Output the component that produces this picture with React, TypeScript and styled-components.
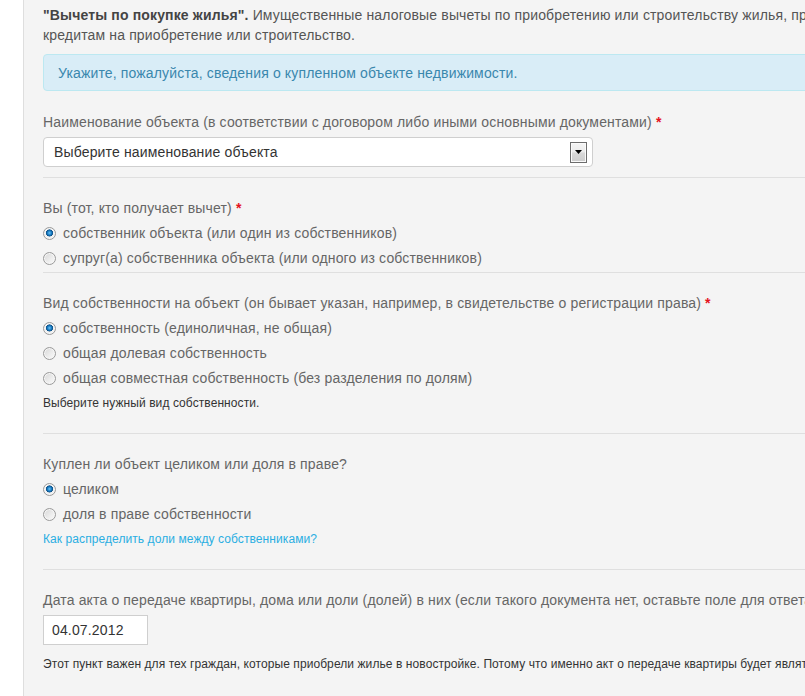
import React from "react";
import styled, { createGlobalStyle } from "styled-components";

const Global = createGlobalStyle`
  html, body { margin: 0; padding: 0; background: #fff; overflow: hidden; }
  body { font-family: "Liberation Sans", Arial, sans-serif; font-size: 14px; letter-spacing: 0.15px; }
`;

const Page = styled.div`
  display: flex;
  min-height: 100vh;
  width: 1000px;
`;

const Sidebar = styled.div`
  width: 23px;
  flex: none;
  background: #fff;
`;

const Main = styled.div`
  flex: 1;
  background: #f4f4f4;
  border-left: 1px solid #dedede;
  padding: 5px 0 0 19px;
`;

const Content = styled.div`
  width: 920px;
  display: flex;
  flex-direction: column;
`;

const Intro = styled.p`
  margin: 0;
  line-height: 20px;
  color: #555;
  b { color: #444; }
`;

const Alert = styled.div`
  margin-top: 9px;
  background: #d9edf7;
  border: 1px solid #bce8f1;
  border-radius: 4px;
  color: #3a87ad;
  line-height: 20px;
  padding: 8px 14px 7px;
`;

const Field = styled.div<{ $pt: number; $pb: number }>`
  display: flex;
  flex-direction: column;
  align-items: flex-start;
  gap: 5px;
  padding-top: ${(p) => p.$pt}px;
  padding-bottom: ${(p) => p.$pb}px;
`;

const Rule = styled.div`
  height: 0;
  border-top: 1px solid #dfdfdf;
`;

const Label = styled.div`
  line-height: 20px;
  color: #666;
  white-space: nowrap;
`;

const Req = styled.span`
  color: #e5131d;
  font-weight: bold;
`;

const SelectBox = styled.div`
  box-sizing: border-box;
  width: 550px;
  height: 30px;
  background: #fff;
  border: 1px solid #cfcfcf;
  border-radius: 4px;
  display: flex;
  align-items: center;
  justify-content: space-between;
  padding: 0 5px 0 10px;
  color: #333;
`;

const DropButton = styled.span`
  box-sizing: border-box;
  width: 17px;
  height: 21px;
  border: 1px solid #6d6d6d;
  box-shadow: inset 0 0 0 1px #fafafa;
  background: linear-gradient(#f4f4f4 0%, #ececec 45%, #d8d8d8 55%, #cdcdcd 100%);
  display: flex;
  justify-content: center;
  padding-top: 7px;
`;

const RadioRow = styled.label`
  display: flex;
  align-items: center;
  gap: 7px;
  line-height: 20px;
  color: #666;
  white-space: nowrap;
`;

const RadioDot = styled.span<{ $checked?: boolean }>`
  box-sizing: border-box;
  width: 13px;
  height: 13px;
  border-radius: 50%;
  border: 1px solid #9a9a9a;
  background: ${(p) =>
    p.$checked
      ? "radial-gradient(circle at 50% 45%, #6ec3f5 0, #1a7fc6 2px, #0d4f86 3.3px, #f2f2f2 3.8px, #e4e4e4 100%)"
      : "linear-gradient(135deg, #d6d6d6 0%, #eeeeee 60%, #fafafa 100%)"};
  box-shadow: inset 0 0 0 1px #f6f6f6;
  flex: none;
`;

const Help = styled.div<{ $spaced?: boolean }>`
  font-size: 12px;
  letter-spacing: 0.08px;
  line-height: 20px;
  color: #333;
  white-space: nowrap;
  margin-top: ${(p) => (p.$spaced ? 4 : 0)}px;
`;

const HelpLink = styled.a`
  font-size: 12px;
  letter-spacing: 0.08px;
  line-height: 20px;
  color: #2aaee2;
  text-decoration: none;
`;

const DateInput = styled.input`
  box-sizing: border-box;
  width: 105px;
  height: 30px;
  border: 1px solid #cfcfcf;
  background: #fff;
  padding: 0 8px;
  font-family: "Liberation Sans", Arial, sans-serif;
  font-size: 14px;
  letter-spacing: 0.15px;
  color: #333;
  outline: none;
`;

const Radio = ({ checked, children }: { checked?: boolean; children: React.ReactNode }) => (
  <RadioRow>
    <RadioDot $checked={checked} />
    {children}
  </RadioRow>
);

export default function App() {
  return (
    <>
      <Global />
      <Page>
        <Sidebar />
        <Main>
          <Content>
            <Intro>
              <b>"Вычеты по покупке жилья".</b> Имущественные налоговые вычеты по приобретению или
              строительству жилья, процентам по ипотечным
              <br />
              кредитам на приобретение или строительство.
            </Intro>
            <Alert>Укажите, пожалуйста, сведения о купленном объекте недвижимости.</Alert>

            <Field $pt={21} $pb={10}>
              <Label>
                Наименование объекта (в соответствии с договором либо иными основными документами) <Req>*</Req>
              </Label>
              <SelectBox>
                <span>Выберите наименование объекта</span>
                <DropButton>
                  <svg width="7" height="4" viewBox="0 0 7 4">
                    <path d="M0 0h7L3.5 4z" fill="#000" />
                  </svg>
                </DropButton>
              </SelectBox>
            </Field>
            <Rule />

            <Field $pt={20} $pb={4}>
              <Label>
                Вы (тот, кто получает вычет) <Req>*</Req>
              </Label>
              <Radio checked>собственник объекта (или один из собственников)</Radio>
              <Radio>супруг(а) собственника объекта (или одного из собственников)</Radio>
            </Field>
            <Rule />

            <Field $pt={20} $pb={20}>
              <Label>
                Вид собственности на объект (он бывает указан, например, в свидетельстве о регистрации права) <Req>*</Req>
              </Label>
              <Radio checked>собственность (единоличная, не общая)</Radio>
              <Radio>общая долевая собственность</Radio>
              <Radio>общая совместная собственность (без разделения по долям)</Radio>
              <Help>Выберите нужный вид собственности.</Help>
            </Field>
            <Rule />

            <Field $pt={20} $pb={20}>
              <Label>Куплен ли объект целиком или доля в праве?</Label>
              <Radio checked>целиком</Radio>
              <Radio>доля в праве собственности</Radio>
              <HelpLink href="#">Как распределить доли между собственниками?</HelpLink>
            </Field>
            <Rule />

            <Field $pt={20} $pb={20}>
              <Label>
                Дата акта о передаче квартиры, дома или доли (долей) в них (если такого документа нет, оставьте поле для ответа пустым)
              </Label>
              <DateInput readOnly defaultValue="04.07.2012" />
              <Help $spaced>
                Этот пункт важен для тех граждан, которые приобрели жилье в новостройке. Потому что именно акт о передаче квартиры будет являться основанием
              </Help>
            </Field>
          </Content>
        </Main>
      </Page>
    </>
  );
}
